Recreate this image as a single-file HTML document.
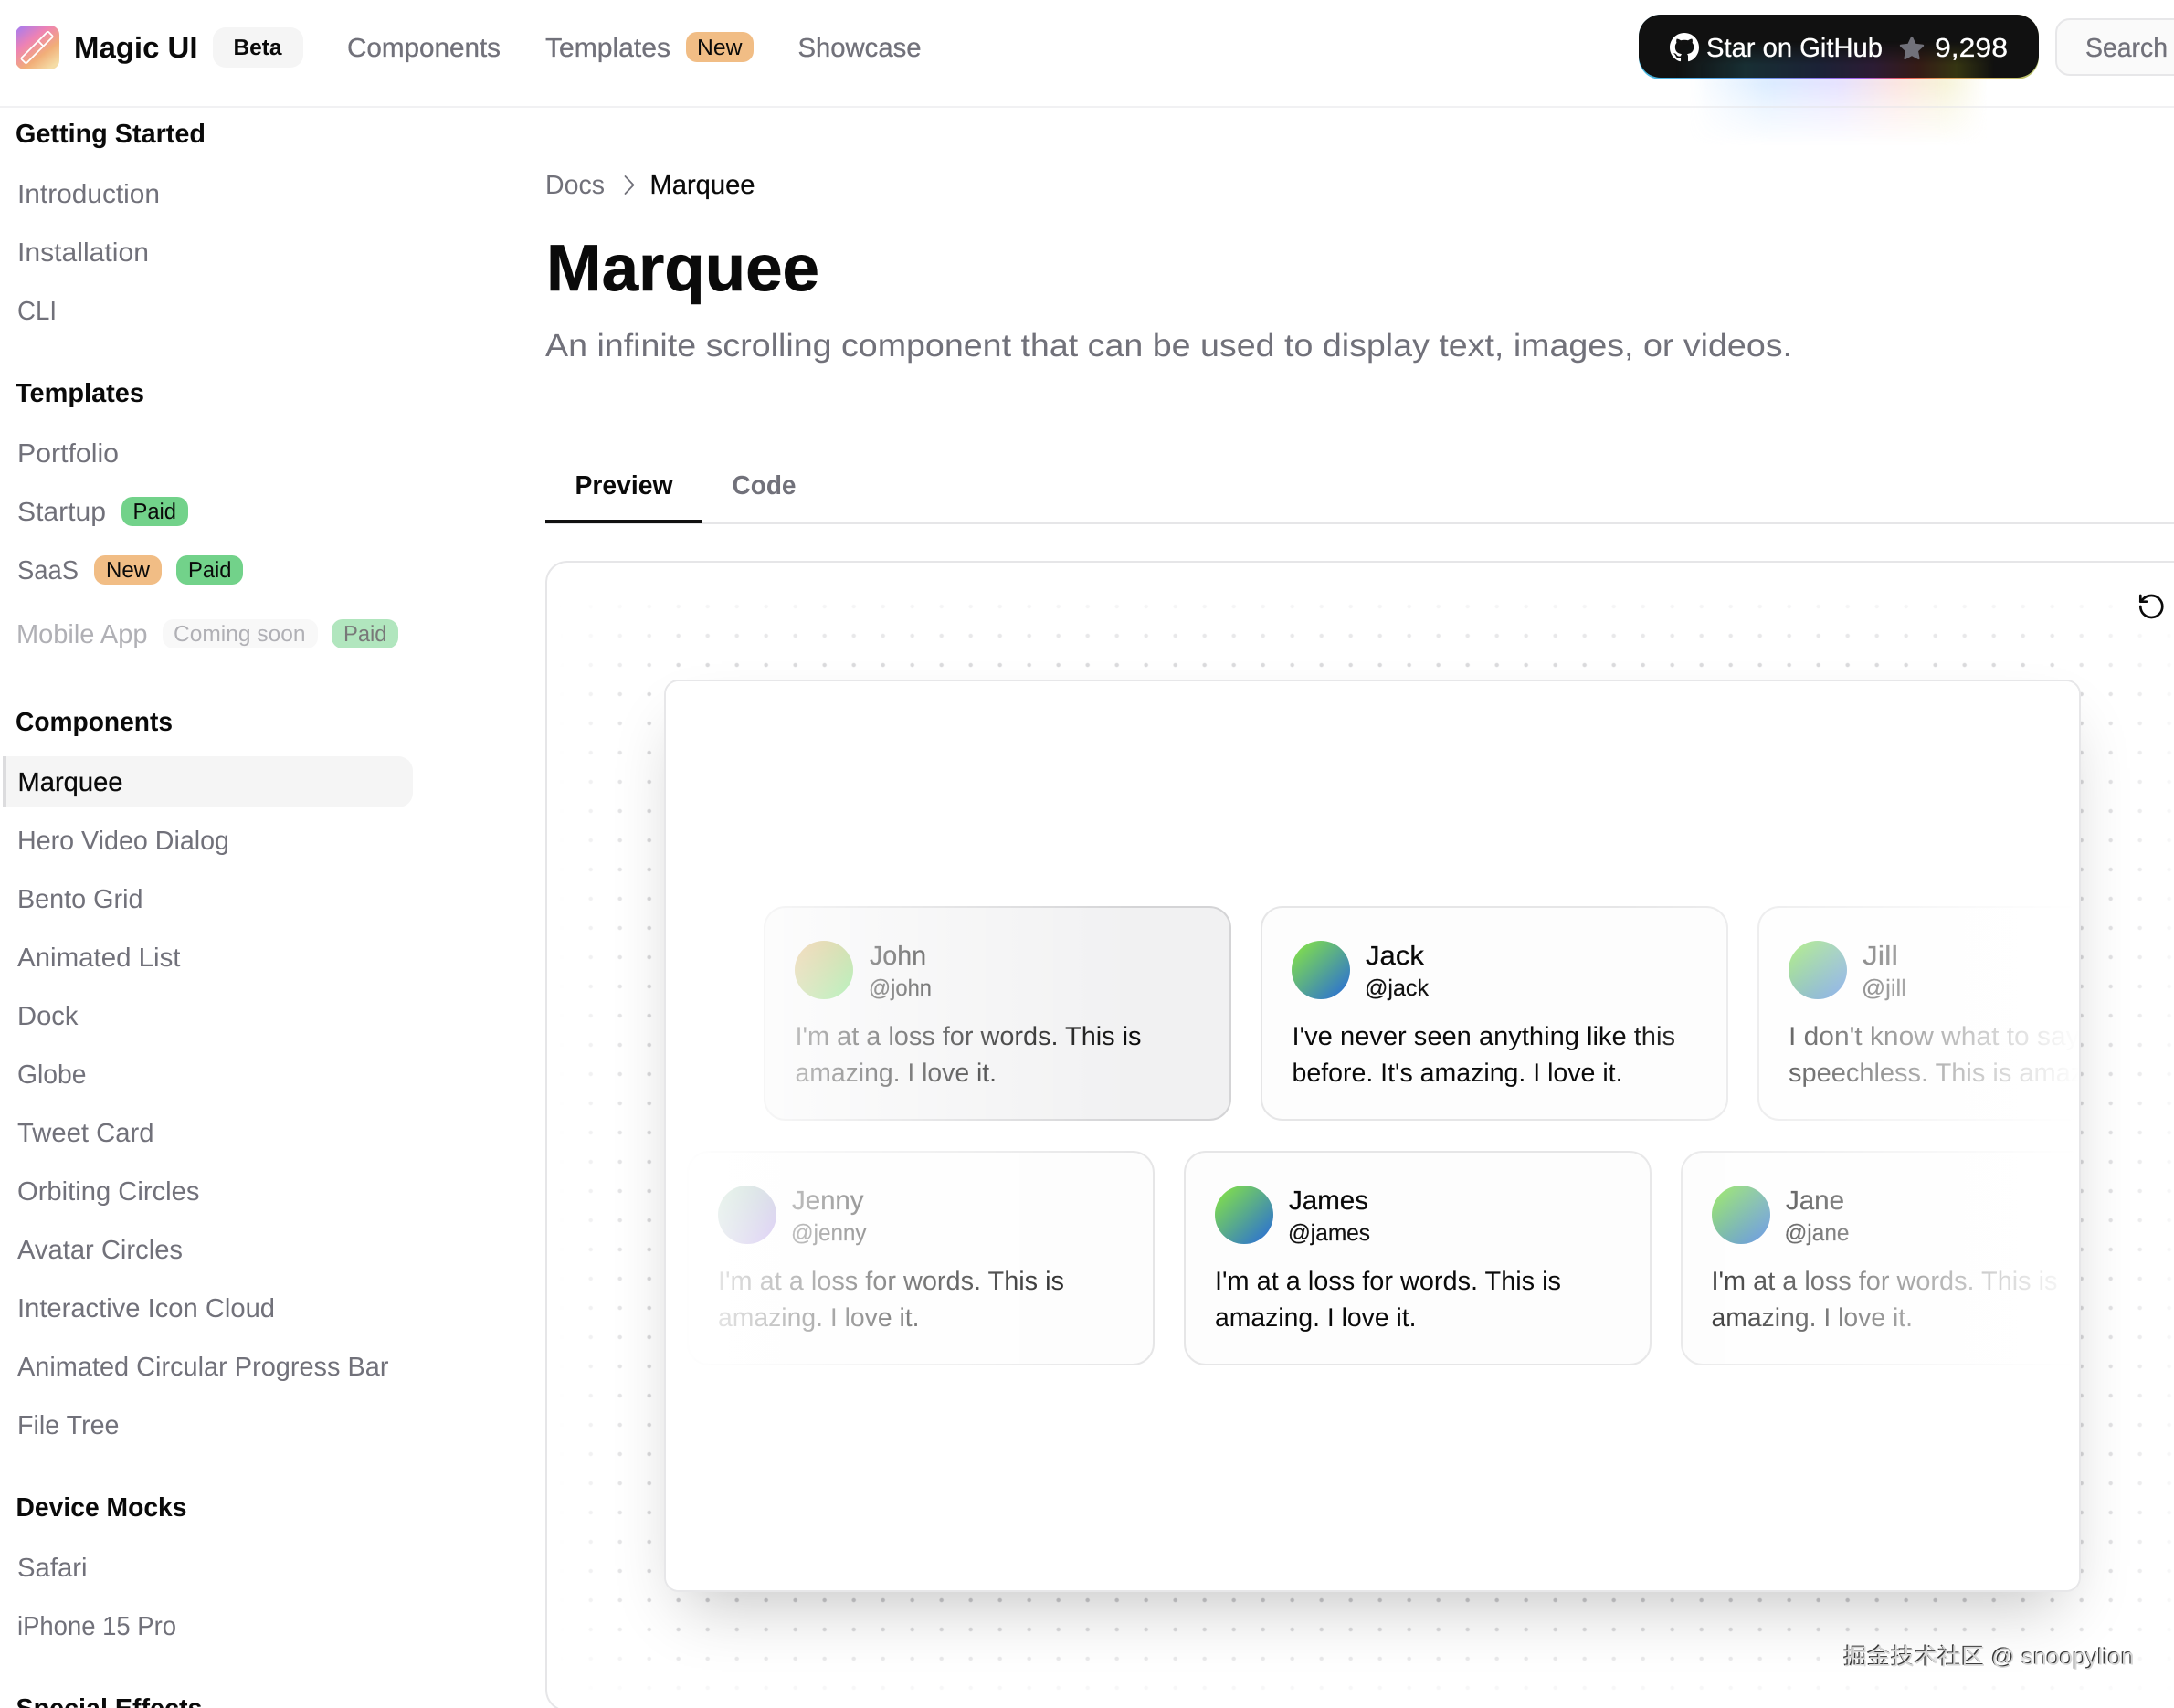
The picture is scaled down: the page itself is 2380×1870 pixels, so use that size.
<!DOCTYPE html>
<html lang="en">
<head>
<meta charset="utf-8">
<title>Marquee</title>
<style>
html,body{margin:0;padding:0;background:#fff;width:2380px;height:1870px;overflow:hidden}
.a{position:absolute}
#wrap{position:relative;width:2380px;height:1870px;overflow:hidden;background:#fff}
svg text{font-family:"Liberation Sans","Noto Sans CJK SC",sans-serif;text-rendering:geometricPrecision}
.h{font-size:29px;font-weight:700;fill:#0a0a0a}
.i{font-size:29px;fill:#71717a}
.n{font-size:29px;fill:#71717a;stroke:#71717a;stroke-width:.3px}
.b{font-size:24.5px;fill:#0a0a0a}
.nm{font-size:29px;fill:#0a0a0a;stroke:#0a0a0a;stroke-width:.25px}
.hd{font-size:25px;fill:#111;stroke:#111;stroke-width:.2px}
.t{font-size:28.5px;fill:#0a0a0a}
.w{font-size:29px;fill:#fff;stroke:#fff;stroke-width:.25px}
</style>
</head>
<body>
<div id="wrap">
  <!-- glow below button -->
  <div class="a" style="left:1850px;top:80px;width:325px;height:80px;opacity:.8;background:linear-gradient(90deg,rgba(207,232,255,0) 0%,#d3e8ff 26%,#e0dbff 50%,#fbdfda 70%,#f4f0cf 86%,rgba(244,240,207,0) 100%);-webkit-mask-image:linear-gradient(to bottom,#000 15%,rgba(0,0,0,.5) 50%,transparent 100%);mask-image:linear-gradient(to bottom,#000 15%,rgba(0,0,0,.5) 50%,transparent 100%);filter:blur(5px)"></div>
  <!-- header line -->
  <div class="a" style="left:0;top:116px;width:2380px;height:2px;background:rgba(228,228,231,.5)"></div>
  <!-- GitHub button -->
  <div class="a" style="left:1794px;top:16px;width:438px;height:71px;border-radius:24px;background:linear-gradient(90deg,hsl(195,70%,58%) 0%,hsl(210,80%,65%) 24%,hsl(270,80%,65%) 56%,hsl(0,80%,64%) 66%,hsl(30,70%,62%) 76%,hsl(70,45%,62%) 100%)"></div>
  <div class="a" style="left:1794px;top:16px;width:438px;height:69px;border-radius:24px;background:#111;overflow:hidden">
    <div class="a" style="left:40px;top:29px;width:350px;height:40px;background:linear-gradient(90deg,transparent 0%,hsl(190,70%,55%) 22%,hsl(225,80%,62%) 45%,hsl(280,70%,60%) 62%,hsl(10,80%,55%) 76%,hsl(60,80%,50%) 88%,transparent 100%);opacity:.17;-webkit-mask-image:linear-gradient(to top,#000 35%,transparent 100%);mask-image:linear-gradient(to top,#000 35%,transparent 100%)"></div>
  </div>
  <!-- search -->
  <div class="a" style="left:2250px;top:20px;width:200px;height:63px;box-sizing:border-box;border:2px solid #e7e7e9;border-radius:16px;background:#fafafa"></div>

  <!-- preview container -->
  <div class="a" style="left:597px;top:614px;width:1850px;height:1260px;box-sizing:border-box;border:2px solid #e6e6e8;border-radius:24px;background:#fff"></div>
  <!-- dots -->
  <div class="a" style="left:598px;top:616px;width:1842px;height:1264px;-webkit-mask-image:linear-gradient(to right,transparent 14px,#000 145px,#000 1642px,transparent 1802px);mask-image:linear-gradient(to right,transparent 14px,#000 145px,#000 1642px,transparent 1802px)">
    <div style="width:100%;height:100%;background-image:radial-gradient(circle at center,#cbcbce 0,#cbcbce 1.7px,transparent 2.7px);background-size:32px 32px;background-position:.7px 0;-webkit-mask-image:linear-gradient(to bottom,transparent 24px,#000 150px,#000 1130px,transparent 1250px);mask-image:linear-gradient(to bottom,transparent 24px,#000 150px,#000 1130px,transparent 1250px)"></div>
  </div>
  <!-- inner box -->
  <div class="a" style="left:727px;top:744px;width:1551px;height:999px;box-sizing:border-box;border:2px solid #e7e7e9;border-radius:16px;background:#fff;box-shadow:0 34px 70px -22px rgba(0,0,0,.24)"></div>

  <svg class="a" style="left:0;top:0" width="2380" height="1870" viewBox="0 0 2380 1870" xmlns="http://www.w3.org/2000/svg">
    <defs>
      <linearGradient id="logo" x1="0" y1="0" x2=".75" y2="1">
        <stop offset="0" stop-color="#a07bf5"/><stop offset=".38" stop-color="#ee82b4"/><stop offset=".72" stop-color="#f1ae78"/><stop offset="1" stop-color="#f5dca6"/>
      </linearGradient>
      <linearGradient id="av" x1=".05" y1=".1" x2=".9" y2=".95">
        <stop offset="0" stop-color="#82e04a"/><stop offset="1" stop-color="#2c71d2"/>
      </linearGradient>
      <linearGradient id="avJ" x1=".05" y1=".1" x2=".9" y2=".95">
        <stop offset="0" stop-color="#cc8a20"/><stop offset="1" stop-color="#55d95a"/>
      </linearGradient>
      <linearGradient id="avN" x1=".05" y1=".1" x2=".9" y2=".95">
        <stop offset="0" stop-color="#3f9a60"/><stop offset="1" stop-color="#7a45d8"/>
      </linearGradient>
      <linearGradient id="fl"><stop offset="0" stop-color="#fff" stop-opacity="1"/><stop offset="1" stop-color="#fff" stop-opacity="0"/></linearGradient>
      <linearGradient id="fr"><stop offset="0" stop-color="#fff" stop-opacity="0"/><stop offset="1" stop-color="#fff" stop-opacity="1"/></linearGradient>
      <clipPath id="boxclip"><rect x="729" y="746" width="1547" height="995" rx="14"/></clipPath>
    </defs>

    <!-- logo -->
    <rect x="17" y="28" width="48" height="48" rx="10" fill="url(#logo)"/>
    <g transform="translate(40.5 52) rotate(-45)" fill="none" stroke="#fff" stroke-width="1.8">
      <rect x="-21" y="-4" width="42" height="8" rx="1.5"/>
      <line x1="6" y1="-4" x2="6" y2="4"/>
    </g>
    <text x="81" y="63" font-size="32" font-weight="700" fill="#0a0a0a" textLength="135.5" lengthAdjust="spacingAndGlyphs">Magic UI</text>
    <rect x="233" y="30" width="99" height="44" rx="14" fill="#f5f5f5"/>
    <text x="255.5" y="60" font-size="24.5" font-weight="700" fill="#0a0a0a" textLength="53" lengthAdjust="spacingAndGlyphs">Beta</text>
    <text class="n" x="380" y="62" textLength="168" lengthAdjust="spacingAndGlyphs">Components</text>
    <text class="n" x="597" y="62" textLength="137" lengthAdjust="spacingAndGlyphs">Templates</text>
    <rect x="751" y="35" width="74" height="33" rx="12" fill="#f1bd85"/>
    <text class="b" x="763" y="60" textLength="49.5" lengthAdjust="spacingAndGlyphs">New</text>
    <text class="n" x="873.5" y="62" textLength="135" lengthAdjust="spacingAndGlyphs">Showcase</text>

    <!-- github -->
    <g transform="translate(1828 36) scale(2)"><path fill="#fff" d="M8 0C3.58 0 0 3.58 0 8c0 3.54 2.29 6.53 5.47 7.59.4.07.55-.17.55-.38 0-.19-.01-.82-.01-1.49-2.01.37-2.53-.49-2.69-.94-.09-.23-.48-.94-.82-1.13-.28-.15-.68-.52-.01-.53.63-.01 1.08.58 1.23.82.72 1.21 1.87.87 2.33.66.07-.52.28-.87.51-1.07-1.78-.2-3.64-.89-3.64-3.95 0-.87.31-1.59.82-2.15-.08-.2-.36-1.02.08-2.12 0 0 .67-.21 2.2.82.64-.18 1.32-.27 2-.27.68 0 1.36.09 2 .27 1.53-1.04 2.2-.82 2.2-.82.44 1.1.16 1.92.08 2.12.51.56.82 1.27.82 2.15 0 3.07-1.87 3.75-3.65 3.95.29.25.54.73.54 1.48 0 1.07-.01 1.93-.01 2.2 0 .21.15.46.55.38A8.013 8.013 0 0016 8c0-4.42-3.58-8-8-8z"/></g>
    <text class="w" x="1868" y="62" textLength="193" lengthAdjust="spacingAndGlyphs">Star on GitHub</text>
    <path d="M2093 41l3.7 7.8 8.4 1.1-6.2 5.8 1.6 8.3-7.5-4.1-7.5 4.1 1.6-8.3-6.2-5.8 8.4-1.1z" fill="#71717a" stroke="#71717a" stroke-width="2.2" stroke-linejoin="round"/>
    <text class="w" x="2118" y="62" textLength="80" lengthAdjust="spacingAndGlyphs">9,298</text>
    <text class="n" x="2283" y="62" textLength="90" lengthAdjust="spacingAndGlyphs">Search</text>

    <!-- sidebar -->
    <text class="h" x="17" y="156" textLength="208" lengthAdjust="spacingAndGlyphs">Getting Started</text>
    <text class="i" x="19" y="222" textLength="156" lengthAdjust="spacingAndGlyphs">Introduction</text>
    <text class="i" x="19" y="286" textLength="144" lengthAdjust="spacingAndGlyphs">Installation</text>
    <text class="i" x="19" y="350" textLength="43" lengthAdjust="spacingAndGlyphs">CLI</text>

    <text class="h" x="17" y="440" textLength="141" lengthAdjust="spacingAndGlyphs">Templates</text>
    <text class="i" x="19" y="506" textLength="111" lengthAdjust="spacingAndGlyphs">Portfolio</text>
    <text class="i" x="19" y="570" textLength="97" lengthAdjust="spacingAndGlyphs">Startup</text>
    <rect x="133" y="544" width="73" height="32" rx="12" fill="#72d28a"/>
    <text class="b" x="145.5" y="568" textLength="47.5" lengthAdjust="spacingAndGlyphs">Paid</text>
    <text class="i" x="19" y="634" textLength="67" lengthAdjust="spacingAndGlyphs">SaaS</text>
    <rect x="103" y="608" width="74" height="32" rx="12" fill="#f1bd85"/>
    <text class="b" x="116" y="632" textLength="48" lengthAdjust="spacingAndGlyphs">New</text>
    <rect x="193" y="608" width="73" height="32" rx="12" fill="#72d28a"/>
    <text class="b" x="206" y="632" textLength="47.5" lengthAdjust="spacingAndGlyphs">Paid</text>
    <g opacity=".55">
      <text class="i" x="18" y="704" textLength="143.5" lengthAdjust="spacingAndGlyphs">Mobile App</text>
      <rect x="178" y="678" width="170" height="32" rx="12" fill="#f3f3f4"/>
      <text class="i" style="font-size:24.5px" x="190" y="702" textLength="144.5" lengthAdjust="spacingAndGlyphs">Coming soon</text>
      <rect x="363" y="678" width="73" height="32" rx="12" fill="#72d28a"/>
      <text class="b" x="376" y="702" textLength="47.5" lengthAdjust="spacingAndGlyphs">Paid</text>
    </g>

    <text class="h" x="17" y="800" textLength="172" lengthAdjust="spacingAndGlyphs">Components</text>
    <path d="M7 828H436a16 16 0 0 1 16 16v24a16 16 0 0 1-16 16H7z" fill="#f5f5f5"/>
    <rect x="3" y="828" width="4" height="56" fill="#dcdcde"/>
    <text class="nm" x="19.5" y="866" textLength="115" lengthAdjust="spacingAndGlyphs">Marquee</text>
    <text class="i" x="19" y="930" textLength="232" lengthAdjust="spacingAndGlyphs">Hero Video Dialog</text>
    <text class="i" x="19" y="994" textLength="137.5" lengthAdjust="spacingAndGlyphs">Bento Grid</text>
    <text class="i" x="19" y="1058" textLength="178.5" lengthAdjust="spacingAndGlyphs">Animated List</text>
    <text class="i" x="19" y="1122" textLength="66.5" lengthAdjust="spacingAndGlyphs">Dock</text>
    <text class="i" x="19" y="1186" textLength="75.5" lengthAdjust="spacingAndGlyphs">Globe</text>
    <text class="i" x="19" y="1250" textLength="149.5" lengthAdjust="spacingAndGlyphs">Tweet Card</text>
    <text class="i" x="19" y="1314" textLength="199.5" lengthAdjust="spacingAndGlyphs">Orbiting Circles</text>
    <text class="i" x="19" y="1378" textLength="181" lengthAdjust="spacingAndGlyphs">Avatar Circles</text>
    <text class="i" x="19" y="1442" textLength="282" lengthAdjust="spacingAndGlyphs">Interactive Icon Cloud</text>
    <text class="i" x="19" y="1506" textLength="406.5" lengthAdjust="spacingAndGlyphs">Animated Circular Progress Bar</text>
    <text class="i" x="19" y="1570" textLength="111.5" lengthAdjust="spacingAndGlyphs">File Tree</text>

    <text class="h" x="17.5" y="1660" textLength="187" lengthAdjust="spacingAndGlyphs">Device Mocks</text>
    <text class="i" x="19" y="1726" textLength="76.5" lengthAdjust="spacingAndGlyphs">Safari</text>
    <text class="i" x="19" y="1790" textLength="174" lengthAdjust="spacingAndGlyphs">iPhone 15 Pro</text>
    <text class="h" x="17.5" y="1880" textLength="204" lengthAdjust="spacingAndGlyphs">Special Effects</text>

    <!-- breadcrumb -->
    <text class="i" x="597" y="212" textLength="65" lengthAdjust="spacingAndGlyphs">Docs</text>
    <path d="M684.5 193l9 9.5-9 9.5" fill="none" stroke="#71717a" stroke-width="1.8" stroke-linecap="round" stroke-linejoin="round"/>
    <text class="nm" x="711.5" y="212" textLength="115" lengthAdjust="spacingAndGlyphs">Marquee</text>
    <text x="598" y="318" font-size="72" font-weight="700" fill="#0a0a0a" stroke="#0a0a0a" stroke-width=".6" textLength="299" lengthAdjust="spacingAndGlyphs">Marquee</text>
    <text x="597" y="390" font-size="35" fill="#71717a" textLength="1365" lengthAdjust="spacingAndGlyphs">An infinite scrolling component that can be used to display text, images, or videos.</text>

    <!-- tabs -->
    <text x="629.5" y="541" font-size="29" font-weight="700" fill="#0a0a0a" textLength="107" lengthAdjust="spacingAndGlyphs">Preview</text>
    <text x="801.5" y="541" font-size="29" font-weight="700" fill="#71717a" textLength="70" lengthAdjust="spacingAndGlyphs">Code</text>
    <rect x="597" y="572" width="1783" height="2" fill="#e6e6e8"/>
    <rect x="597" y="569" width="172" height="4" fill="#111"/>

    <!-- refresh -->
    <g transform="translate(2339.3 648) scale(1.333)" fill="none" stroke="#0a0a0a" stroke-width="2" stroke-linecap="round" stroke-linejoin="round">
      <path d="M3 12a9 9 0 1 0 9-9 9.75 9.75 0 0 0-6.74 2.74L3 8"/><path d="M3 3v5h5"/>
    </g>

    <!-- cards -->
    <g clip-path="url(#boxclip)">
      <!-- row 1 -->
      <rect x="837" y="993" width="510" height="233" rx="23" fill="#f1f1f2" stroke="#d4d4d6" stroke-width="2"/>
      <circle cx="902" cy="1062" r="32" fill="url(#avJ)"/>
      <text class="nm" x="952" y="1056" textLength="62" lengthAdjust="spacingAndGlyphs">John</text>
      <text class="hd" x="951" y="1090" textLength="69" lengthAdjust="spacingAndGlyphs">@john</text>
      <text class="t" x="870.5" y="1144" textLength="379" lengthAdjust="spacingAndGlyphs">I'm at a loss for words. This is</text>
      <text class="t" x="870.5" y="1184" textLength="220.5" lengthAdjust="spacingAndGlyphs">amazing. I love it.</text>

      <rect x="1381" y="993" width="510" height="233" rx="23" fill="#fdfdfd" stroke="#e6e6e7" stroke-width="2"/>
      <circle cx="1446" cy="1062" r="32" fill="url(#av)"/>
      <text class="nm" x="1495" y="1056" textLength="64" lengthAdjust="spacingAndGlyphs">Jack</text>
      <text class="hd" x="1494" y="1090" textLength="70" lengthAdjust="spacingAndGlyphs">@jack</text>
      <text class="t" x="1414.5" y="1144" textLength="419.5" lengthAdjust="spacingAndGlyphs">I've never seen anything like this</text>
      <text class="t" x="1414.5" y="1184" textLength="362" lengthAdjust="spacingAndGlyphs">before. It's amazing. I love it.</text>

      <rect x="1925" y="993" width="510" height="233" rx="23" fill="#fdfdfd" stroke="#e6e6e7" stroke-width="2"/>
      <circle cx="1990" cy="1062" r="32" fill="url(#av)"/>
      <text class="nm" x="2039" y="1056" textLength="39" lengthAdjust="spacingAndGlyphs">Jill</text>
      <text class="hd" x="2038" y="1090" textLength="49" lengthAdjust="spacingAndGlyphs">@jill</text>
      <text class="t" x="1958" y="1144" textLength="372" lengthAdjust="spacingAndGlyphs">I don't know what to say. I'm</text>
      <text class="t" x="1958" y="1184" textLength="370" lengthAdjust="spacingAndGlyphs">speechless. This is amazing.</text>

      <!-- row 2 -->
      <rect x="753" y="1261" width="510" height="233" rx="23" fill="#fdfdfd" stroke="#e6e6e7" stroke-width="2"/>
      <circle cx="818" cy="1330" r="32" fill="url(#avN)"/>
      <text class="nm" x="867" y="1324" textLength="78.5" lengthAdjust="spacingAndGlyphs">Jenny</text>
      <text class="hd" x="866" y="1358" textLength="82.5" lengthAdjust="spacingAndGlyphs">@jenny</text>
      <text class="t" x="786" y="1412" textLength="379" lengthAdjust="spacingAndGlyphs">I'm at a loss for words. This is</text>
      <text class="t" x="786" y="1452" textLength="220.5" lengthAdjust="spacingAndGlyphs">amazing. I love it.</text>

      <rect x="1297" y="1261" width="510" height="233" rx="23" fill="#fdfdfd" stroke="#e6e6e7" stroke-width="2"/>
      <circle cx="1362" cy="1330" r="32" fill="url(#av)"/>
      <text class="nm" x="1411" y="1324" textLength="87" lengthAdjust="spacingAndGlyphs">James</text>
      <text class="hd" x="1410" y="1358" textLength="90" lengthAdjust="spacingAndGlyphs">@james</text>
      <text class="t" x="1330" y="1412" textLength="379" lengthAdjust="spacingAndGlyphs">I'm at a loss for words. This is</text>
      <text class="t" x="1330" y="1452" textLength="220.5" lengthAdjust="spacingAndGlyphs">amazing. I love it.</text>

      <rect x="1841" y="1261" width="510" height="233" rx="23" fill="#fdfdfd" stroke="#e6e6e7" stroke-width="2"/>
      <circle cx="1906" cy="1330" r="32" fill="url(#av)"/>
      <text class="nm" x="1955" y="1324" textLength="64" lengthAdjust="spacingAndGlyphs">Jane</text>
      <text class="hd" x="1953.5" y="1358" textLength="71" lengthAdjust="spacingAndGlyphs">@jane</text>
      <text class="t" x="1873.5" y="1412" textLength="379" lengthAdjust="spacingAndGlyphs">I'm at a loss for words. This is</text>
      <text class="t" x="1873.5" y="1452" textLength="220.5" lengthAdjust="spacingAndGlyphs">amazing. I love it.</text>

      <!-- fades -->
      <rect x="729" y="746" width="516" height="995" fill="url(#fl)"/>
      <rect x="1760" y="746" width="516" height="995" fill="url(#fr)"/>
    </g>

    <!-- watermark -->
    <g font-size="25">
      <text x="2017.3" y="1821.3" fill="#3a3a3a" textLength="318" lengthAdjust="spacingAndGlyphs">掘金技术社区 @ snoopylion</text>
      <text x="2018.6" y="1822.3" fill="#d6d6d6" textLength="318" lengthAdjust="spacingAndGlyphs">掘金技术社区 @ snoopylion</text>
    </g>
  </svg>
</div>
</body>
</html>
